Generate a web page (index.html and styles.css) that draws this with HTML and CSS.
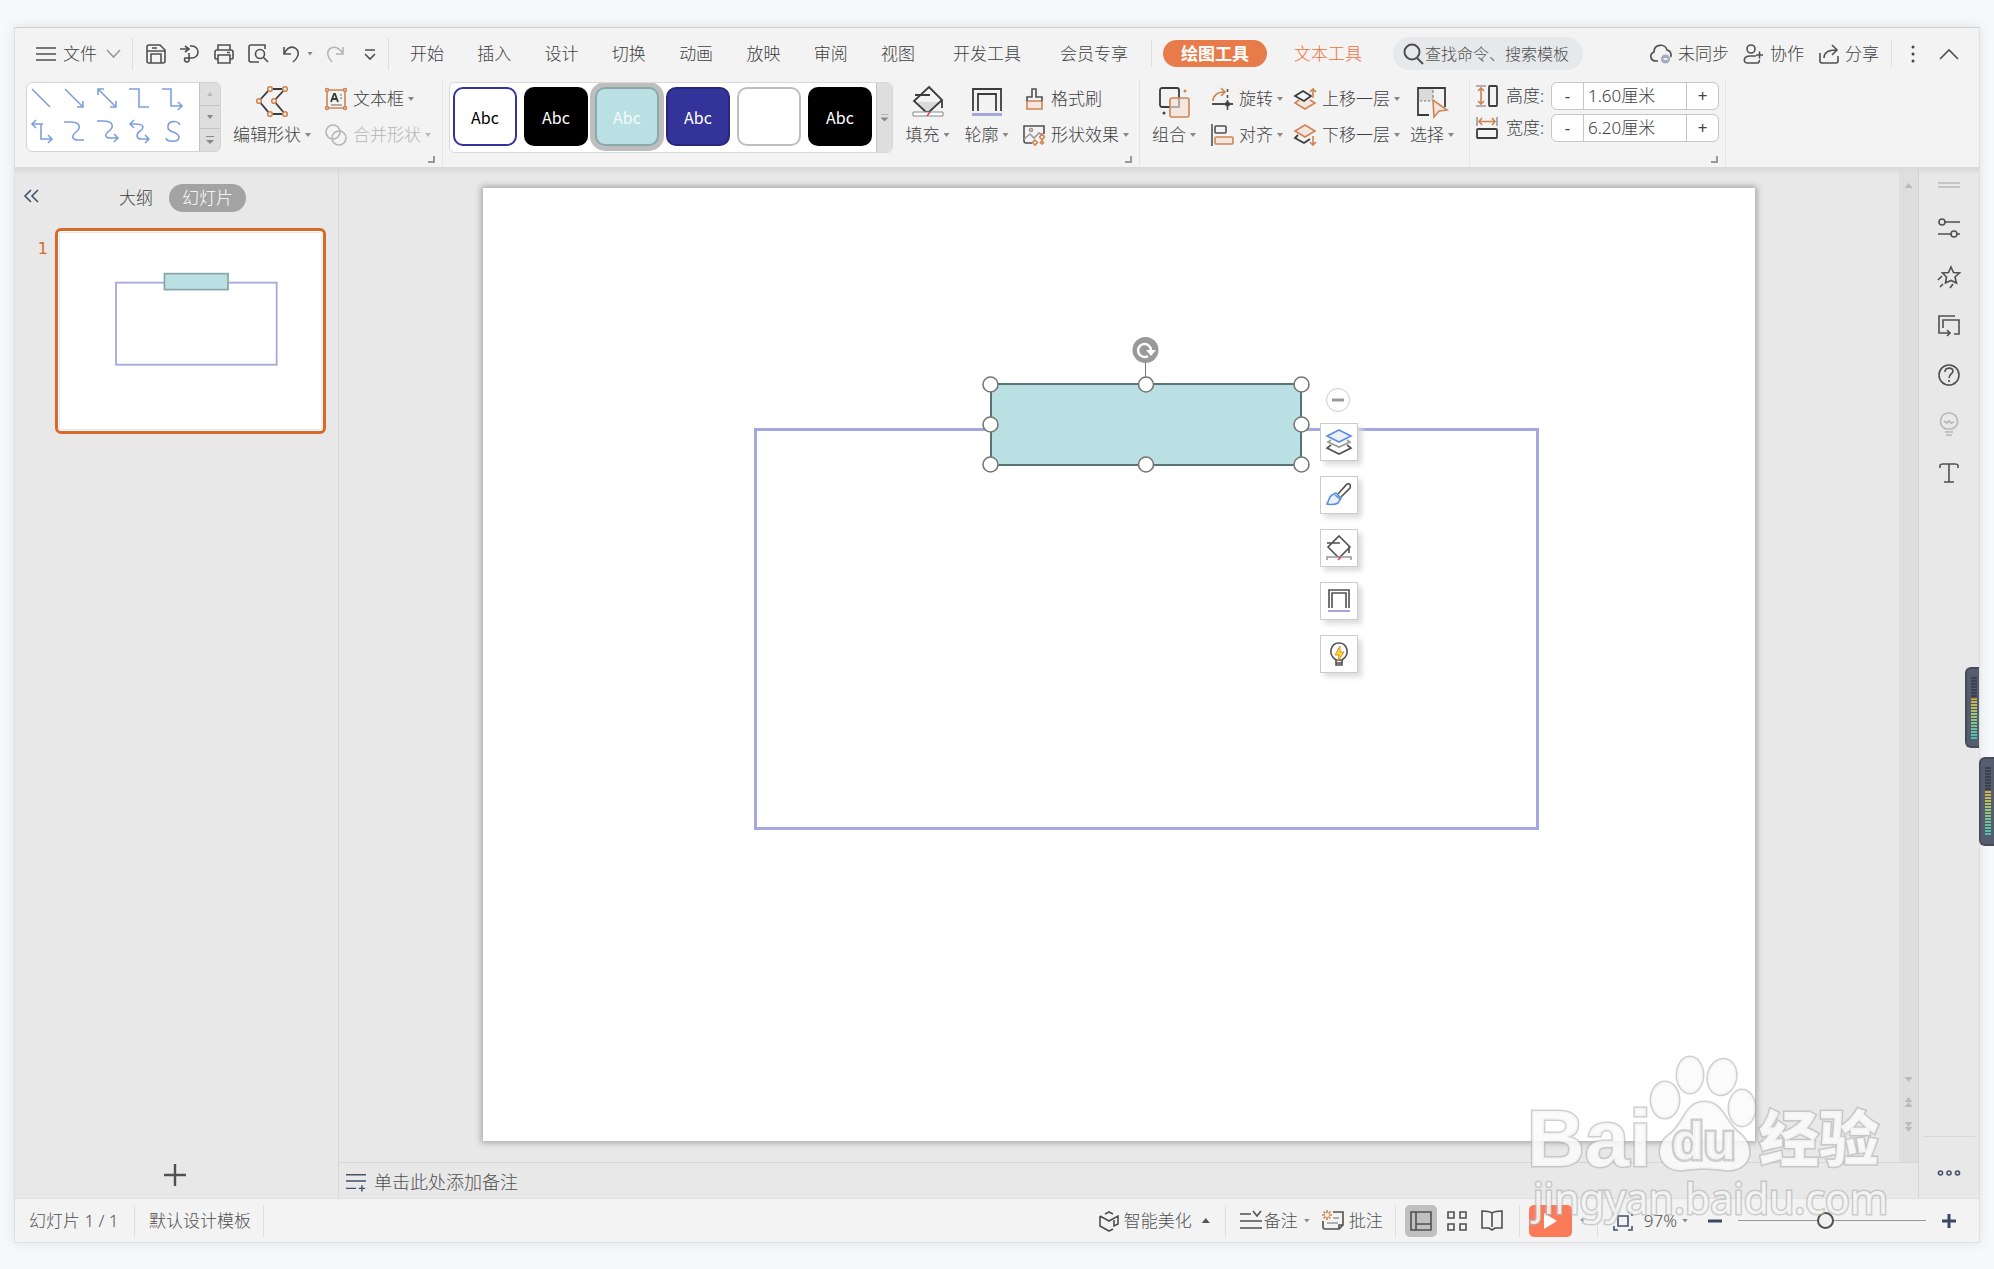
FILE: index.html
```html
<!DOCTYPE html>
<html lang="zh-CN">
<head>
<meta charset="utf-8">
<meta name="viewport" content="width=device-width, initial-scale=1">
<title>演示文稿</title>
<link rel="stylesheet" href="styles.css">
</head>
<body>
<div class="app">
  <header class="menu">
    <button class="file"><svg class="i20" viewBox="0 0 20 20"><path d="M0 4h20M0 10h20M0 16h20"/></svg>文件<svg class="i13 soft" viewBox="0 0 13 13"><path d="M0 3l6.500 7L13 3"/></svg></button>
    <span class="sep"></span>
    <div class="quick">
      <button aria-label="保存"><svg class="i20" viewBox="0 0 20 20"><path d="M3 1h11l5 5v11a2 2 0 0 1-2 2H3a2 2 0 0 1-2-2V3a2 2 0 0 1 2-2zM5 19V10h10v9M1 7h18M6 4h5"/></svg></button>
      <button aria-label="导出"><svg class="i20" viewBox="0 0 20 20"><path d="M0 5h8M5 2l4 3-4 3M10 2h2a6 6 0 0 1 0 12H5a2.500 2.500 0 1 0 4 3V9"/></svg></button>
      <button aria-label="打印"><svg class="i20" viewBox="0 0 20 20"><path d="M4 6V1h12v5M4 15H2a1 1 0 0 1-1-1V8a2 2 0 0 1 2-2h14a2 2 0 0 1 2 2v6a1 1 0 0 1-1 1h-2M4 11h12v8H4zM13 8.500h3"/></svg></button>
      <button aria-label="预览"><svg class="i20" viewBox="0 0 20 20"><path d="M17 5V1H3a2 2 0 0 0-2 2v13a2 2 0 0 0 2 2h8"/><circle cx="12" cy="10" r="4.500"/><path d="M15.500 13.500L20 18"/></svg></button>
      <button aria-label="撤销"><svg class="i20" viewBox="0 0 20 20"><path d="M2 3v7h7M2 10C5 4 9 2 13 4c5 3 4 9-2 14"/></svg></button>
    </div>
    <span class="caret undo-caret"></span>
    <button class="redo" aria-label="重做"><svg class="i20 faint" viewBox="0 0 20 20"><path d="M18 3v7h-7M18 10C15 4 10 2 6 4c-5 3-4 9 1 14"/></svg></button>
    <button class="more" aria-label="更多"><svg class="i14" viewBox="0 0 14 14"><path d="M2 3h10M2 7l5 5 5-5"/></svg></button>
    <span class="sep"></span>
    <nav class="tabs"><button>开始</button><button>插入</button><button>设计</button><button>切换</button><button>动画</button><button>放映</button><button>审阅</button><button>视图</button></nav>
    <nav class="tabs-wide"><button>开发工具</button><button>会员专享</button></nav>
    <span class="sep short"></span>
    <button class="tab-active">绘图工具</button>
    <button class="tab-text">文本工具</button>
    <label class="search"><svg class="i22" viewBox="0 0 22 22"><circle cx="9" cy="9" r="7.500"/><path d="M14 15l6 6"/></svg><input type="text" aria-label="搜索" placeholder="查找命令、搜索模板"></label>
    <div class="account">
      <button><svg class="i22" viewBox="0 0 22 22"><path d="M8 18H6C0 18-1 11 4 9 4 1 15 0 17 7c5 1 5 7 2 8"/><circle class="badge" cx="15.500" cy="16" r="5"/><path class="white" d="M13.500 16h4"/></svg>未同步</button>
      <button><svg class="i20" viewBox="0 0 20 20"><circle cx="7" cy="5" r="4"/><path d="M12 12H6c-7 0-7 7-3 7h10c2 0 3-2 2-3M12 11h7M15.500 7.500v7"/></svg>协作</button>
      <button><svg class="i20" viewBox="0 0 20 20"><path d="M1 9v8a2 2 0 0 0 2 2h14a2 2 0 0 0 2-2v-5M5 14c0-6 4-8 12-8M13 1l5 5-5 5"/></svg>分享</button>
    </div>
    <span class="sep short"></span>
    <button class="dots" aria-label="选项"><svg class="i6" viewBox="0 0 6 20"><g class="dark"><circle cx="3" cy="3" r="1.500"/><circle cx="3" cy="10" r="1.500"/><circle cx="3" cy="17" r="1.500"/></g></svg></button>
    <button class="collapse" aria-label="收起"><svg class="i20" viewBox="0 0 20 20"><path d="M1 15l9-9 9 9"/></svg></button>
  </header>

  <section class="ribbon">
    <div class="group">
      <div class="shapes">
        <svg class="shape-grid" viewBox="0 0 172 68"><path d="M5 6l18 18M38 6l18 18M50 24h6v-6M71 6l18 18M83 24h6v-6M77 6h-6v6M102 6h10v18h10M135 6h9v17h11M151 19l4 4-4 4M16 41H5M9 37l-4 4 4 4M14 41v15h11M21 52l4 4-4 4M37 39h6c11 0 11 6 6 10s-4 8 2 8h6M70 38h6c11 0 11 6 6 10s-4 7 2 7h7M87 51l4 4-4 4M103 41h5c10 0 9 4 5 7s-4 8 1 8h8M107 37l-4 4 4 4M118 52l4 4-4 4M153 42c-2-5-13-5-12 3 1 5 10 3 11 9 0 6-12 5-13 1"/></svg>
        <div class="scroller"><button aria-label="上"><span class="caret up pale"></span></button><button aria-label="下"><span class="caret"></span></button><button aria-label="展开"><span class="caret bar"></span></button></div>
      </div>
      <button class="big edit"><svg class="i32" viewBox="0 0 32 32"><path class="thick" d="M14 3h15L18 15l11 13H14L3 15z"/><g class="node"><circle cx="14" cy="3" r="2.300"/><circle cx="29" cy="3" r="2.300"/><circle cx="18" cy="15" r="2.300"/><circle cx="29" cy="28" r="2.300"/><circle cx="14" cy="28" r="2.300"/><circle cx="3" cy="15" r="2.300"/></g></svg><span>编辑形状<i class="caret"></i></span></button>
      <div class="stack box-stack">
        <button><svg class="i22" viewBox="0 0 22 22"><path class="or" d="M2 2h18v18H2z"/><path class="thick" d="M6 14l3-8h1l3 8M7 11h5"/><path class="mid" d="M15 7h2M15 10h2M6 17h11"/><g class="node"><circle cx="2" cy="2" r="1.500"/><circle cx="20" cy="2" r="1.500"/><circle cx="2" cy="20" r="1.500"/><circle cx="20" cy="20" r="1.500"/></g></svg><span>文本框</span><i class="caret"></i></button>
        <button class="disabled" disabled><svg class="i22 faint" viewBox="0 0 22 22"><circle cx="8" cy="8" r="7"/><circle cx="14" cy="14" r="7"/></svg><span>合并形状</span><i class="caret pale"></i></button>
      </div>
      <i class="corner"></i>
    </div>

    <div class="group">
      <div class="styles">
        <button class="tile outline">Abc</button><button class="tile black">Abc</button><button class="tile teal">Abc</button><button class="tile blue">Abc</button><button class="tile blank" aria-label="空白"></button><button class="tile black">Abc</button>
        <button class="drop" aria-label="展开样式"><span class="caret bar"></span></button>
      </div>
      <button class="big fill"><svg class="i32" viewBox="0 0 32 32"><path class="shade" d="M4 16h25L17 27h-3z"/><path class="thick" d="M17 1l13 13-13 12h-3L2 15zM3 9h15M30 14v8"/><path class="lite" d="M1 26h30v4H1z"/><path class="red" d="M18 26l-3 4"/></svg><span>填充<i class="caret"></i></span></button>
      <button class="big line"><svg class="i32" viewBox="0 0 32 32"><path class="thick" d="M2 25V3h28v22M7 25V8h18v17"/><path class="violet" d="M1 28.500h30"/></svg><span>轮廓<i class="caret"></i></span></button>
      <div class="stack">
        <button><svg class="i22" viewBox="0 0 22 22"><path class="peach" d="M4 13h15v8H4z"/><path d="M4 13V9h5V1h4v8h6v4"/></svg><span>格式刷</span></button>
        <button><svg class="i22" viewBox="0 0 22 22"><path d="M9 19H3a2 2 0 0 1-2-2V2h20v8"/><path class="mid" d="M1 15l6-5 4 4 5-5 4 2"/><circle class="mid" cx="8" cy="6" r="1.500"/><path class="or" d="M19 10l2.500 3-2.500 3-2.500-3zM12 16l2.500 2.500L12 21l-2.500-2.500zM19 17l1.500 1.500L19 20l-1.500-1.500z"/></svg><span>形状效果</span><i class="caret"></i></button>
      </div>
      <i class="corner"></i>
    </div>

    <div class="group">
      <button class="big combine"><svg class="i32" viewBox="0 0 32 32"><rect class="thick" x="2" y="2" width="19" height="19" rx="2"/><rect class="peach" x="12" y="12" width="19" height="19" rx="2"/><path class="mid" d="M21 12v9h-9"/><circle class="dark" cx="6" cy="27" r="1.500"/><circle class="ordot" cx="27" cy="5" r="1.500"/></svg><span>组合<i class="caret"></i></span></button>
      <div class="stack">
        <button><svg class="i22" viewBox="0 0 22 22"><path class="or" d="M2 13C2 8 6 4 13 4M10 0l4 4-4 4"/><path class="thick" d="M1 16h21"/><path d="M16.500 1v3M16.500 7v3M16.500 12v10"/><circle class="dark" cx="16.500" cy="16" r="2.500"/></svg><span>旋转</span><i class="caret"></i></button>
        <button><svg class="i22" viewBox="0 0 22 22"><path d="M1 0v22"/><rect x="4" y="2" width="11" height="7" rx="1"/><rect class="peach" x="4" y="13" width="18" height="7" rx="1"/></svg><span>对齐</span><i class="caret"></i></button>
      </div>
      <div class="stack layers">
        <button><svg class="i22" viewBox="0 0 22 22"><path class="peach" d="M5 12l-4 3 10 6 10-6-5-3"/><path class="thick" d="M9 3l8 5-7 5-9-5z"/><path class="or" d="M19 10V1M16 4l3-3 3 3"/></svg><span>上移一层</span><i class="caret"></i></button>
        <button><svg class="i22" viewBox="0 0 22 22"><path class="thick" d="M4 11l-3 3 9 5 6-4"/><path class="peach" d="M11 1l10 6-10 6L1 7z"/><path class="or" d="M19 12v9M16 18l3 3 3-3"/></svg><span>下移一层</span><i class="caret"></i></button>
      </div>
      <button class="big select"><svg class="i32" viewBox="0 0 32 32"><path class="shade" d="M3 3h14v12H3z"/><path class="mid" d="M17 4v3M17 9v3M4 15h2M8 15h2M12 15h2"/><path class="thick" d="M13 29H2V2h27v19"/><path class="peach" d="M17 14l1 17 5-6 8-1z"/></svg><span>选择<i class="caret"></i></span></button>
    </div>

    <div class="group size">
      <div class="field"><svg class="i22" viewBox="0 0 22 22"><path class="mid" d="M0 1h10M0 21h10"/><path class="or" d="M5 3v16M2 6l3-3 3 3M2 16l3 3 3-3"/><rect class="thick" x="13" y="1" width="8" height="20" rx="1"/></svg><label for="h">高度:</label><div class="spin"><button aria-label="减小高度">-</button><input id="h" value="1.60厘米"><button aria-label="增大高度">+</button></div></div>
      <div class="field"><svg class="i22" viewBox="0 0 22 22"><path class="mid" d="M1 0v9M21 0v9"/><path class="or" d="M3 4.500h16M6 1L3 4.500 6 8M16 1l3 3.500L16 8"/><rect class="thick" x="1" y="12" width="20" height="9" rx="1"/></svg><label for="w">宽度:</label><div class="spin"><button aria-label="减小宽度">-</button><input id="w" value="6.20厘米"><button aria-label="增大宽度">+</button></div></div>
      <i class="corner"></i>
    </div>
  </section>

  <div class="work">
    <aside class="pane">
      <div class="pane-head"><button class="fold" aria-label="折叠"><svg class="i16 navy" viewBox="0 0 16 16"><path d="M7 2L1 8l6 6M14 2L8 8l6 6"/></svg></button><button class="outline-tab">大纲</button><button class="slides-tab">幻灯片</button></div>
      <div class="thumb-row"><span class="num">1</span><button class="thumb" aria-label="第1页"><svg viewBox="0 0 1272 953"><rect class="frame-s" x="273" y="242" width="783" height="400"/><rect class="plate-s" x="509" y="198" width="310" height="78"/></svg></button></div>
      <button class="add" aria-label="新建幻灯片"><svg class="i22" viewBox="0 0 22 22"><path d="M11 0v22M0 11h22"/></svg></button>
    </aside>

    <main class="center">
      <div class="canvas">
        <div class="slide">
          <svg class="drawing" viewBox="0 0 1272 953">
            <rect class="frame" x="272.500" y="241.500" width="782" height="399"/>
            <rect class="plate" x="508" y="196" width="310" height="81"/>
            <path class="stem" d="M662.500 174v18"/>
            <circle class="knob" cx="662.500" cy="162" r="13"/>
            <path class="turn" d="M665 168a6.500 6.500 0 1 1 3-6"/>
            <path class="turn-tip" d="M663 162h10l-5 6z"/>
            <g class="handles"><circle cx="507.500" cy="196.500" r="7.500"/><circle cx="663" cy="196.500" r="7.500"/><circle cx="818.500" cy="196.500" r="7.500"/><circle cx="507.500" cy="236.500" r="7.500"/><circle cx="818.500" cy="236.500" r="7.500"/><circle cx="507.500" cy="276.500" r="7.500"/><circle cx="663" cy="276.500" r="7.500"/><circle cx="818.500" cy="276.500" r="7.500"/></g>
          </svg>
          <div class="floaters">
            <button class="round" aria-label="收起工具"><svg class="i12" viewBox="0 0 12 12"><path d="M0 6h12"/></svg></button>
            <button aria-label="图层"><svg class="i24" viewBox="0 0 24 24"><path d="M4 15l-4 3 12 6 12-6-4-3"/><path class="mid" d="M4 10l-3 2 11 5 11-5-3-2"/><path class="sky" d="M12 0l12 6-12 6L0 6z"/></svg></button>
            <button aria-label="画笔"><svg class="i24" viewBox="0 0 24 24"><path d="M11 11l9-10c3-1 4 1 3 4L14 14"/><path class="sky" d="M9 10l5 5-3 5c-3 2-6 2-11 1 2-3 2-8 5-9zM8 12l5 4"/></svg></button>
            <button aria-label="填充"><svg class="i24" viewBox="0 0 24 24"><path d="M12 0l11 11-10 10h-2L1 11zM0 7h13M22 10v7"/><path class="mid" d="M0 24v-3h24v3"/><path class="red" d="M14 21l-3 3"/></svg></button>
            <button aria-label="轮廓"><svg class="i24" viewBox="0 0 24 24"><path d="M2 19V1h20v18M5 19V4h14v15"/><path class="violet thin" d="M1 22h22"/></svg></button>
            <button aria-label="灵感"><svg class="i24" viewBox="0 0 24 24"><path d="M9 18c-9-6-5-17 3-17s12 11 3 17v5H9v-5h6M9 21h6"/><path class="bolt" d="M13 4l-5 9h4l-1 6 6-9h-4z"/></svg></button>
          </div>
        </div>
      </div>
      <div class="track"><i class="caret up pale"></i><span class="track-foot"><i class="caret pale"></i><b><i class="caret up pale"></i><i class="caret up pale"></i></b><b><i class="caret pale"></i><i class="caret pale"></i></b></span></div>
      <div class="notes"><svg class="i20 navy" viewBox="0 0 22 22"><path d="M0 3h22M0 10h22M0 18h11M14 18h7M17.500 14.500v7"/></svg><span>单击此处添加备注</span></div>
    </main>

    <aside class="side">
      <span class="grip"></span>
      <button aria-label="属性"><svg class="i22" viewBox="0 0 22 22"><circle cx="4" cy="5" r="3"/><path d="M7 5h15M0 17h13M19 17h3"/><circle cx="16" cy="17" r="3"/></svg></button>
      <button aria-label="动画"><svg class="i22" viewBox="0 0 22 22"><path d="M13 1l2.500 5.500 6 .5-4.500 4 1.500 6-5.500-2.500-5.500 2.500 1-6-4-4 6-.5zM4 10l-4 4M5 18l-3 3M15 18l-3 4"/></svg></button>
      <button aria-label="切换"><svg class="i22" viewBox="0 0 22 22"><path d="M17 1H1v17h11M9 15l3 3-3 3M5 13V5h16v14h-5"/></svg></button>
      <button aria-label="帮助"><svg class="i22" viewBox="0 0 22 22"><circle cx="11" cy="11" r="10"/><path d="M7 8c0-5 8-5 8-1 0 3-4 3-4 7M11 16v2"/></svg></button>
      <button aria-label="提示"><svg class="i22 faint" viewBox="0 0 22 22"><path d="M8 16C-1 12 2 0 11 0s12 12 3 16zM7 19h8M8 22h6M6 8l3 2 2-2 2 2 3-1"/></svg></button>
      <button aria-label="文字"><svg class="i22" viewBox="0 0 22 22"><path d="M2 6V4c0-2 1-2 3-2h12c2 0 3 0 3 2v2M11 2v18M6 20h10"/></svg></button>
      <button class="side-more" aria-label="更多"><svg class="i22 navy" viewBox="0 0 22 22"><circle cx="2.500" cy="11" r="2"/><circle cx="11" cy="11" r="2"/><circle cx="19.500" cy="11" r="2"/></svg></button>
    </aside>
  </div>

  <footer class="status">
    <span class="page">幻灯片 1 / 1</span><span class="sep"></span><span class="tpl">默认设计模板</span><span class="sep"></span>
    <button class="beauty"><svg class="i20" viewBox="0 0 20 20"><path d="M6 3l4-2 4 2M1 5v10l9 5 4-2M1 5l9 5 9-5v8l-4 2V9"/></svg>智能美化<i class="caret up wide"></i></button>
    <span class="sep"></span>
    <button class="memo"><svg class="i22" viewBox="0 0 22 22"><path d="M0 4h11M13 1l4 5 4-5M0 11h22M0 18h22"/></svg>备注<i class="caret"></i></button>
    <button class="comment"><svg class="i22" viewBox="0 0 22 22"><path d="M11 2h10v13l-4 4H3a2 2 0 0 1-2-2v-6M17 19v-4h4"/><path class="mid" d="M11 8h6M5 13h11"/><path class="or" d="M5 0v3M5 7v3M0 5h3M7 5h3M1.500 1.500l2 2M6.500 6.500l2 2M8.500 1.500l-2 2M3.500 6.500l-2 2"/></svg>批注</button>
    <span class="sep"></span>
    <button class="view on" aria-label="普通视图"><svg class="i22" viewBox="0 0 22 22"><path d="M1 2h20v18H1zM6 2v18M6 14h15"/></svg></button>
    <button class="view" aria-label="浏览视图"><svg class="i20" viewBox="0 0 20 20"><path d="M1 1h6v6H1zM13 1h6v6h-6zM1 13h6v6H1zM13 13h6v6h-6z"/></svg></button>
    <button class="view" aria-label="阅读视图"><svg class="i22" viewBox="0 0 22 22"><path d="M11 3C8 1 5 1 1 1v17h7l3 2 3-2h7V1c-4 0-7 0-10 2v14"/></svg></button>
    <span class="sep"></span>
    <button class="play" aria-label="放映"><svg class="i16" viewBox="0 0 16 16"><path d="M2 0l13 8-13 8z"/></svg></button>
    <i class="caret play-caret"></i>
    <span class="sep"></span>
    <button class="fit" aria-label="适应窗口"><svg class="i20 navy" viewBox="0 0 20 20"><path d="M1 5V1h4M15 1h4v4M19 15v4h-4M5 19H1v-4M5 5h10v10H5z"/></svg></button>
    <button class="zoom">97%<i class="caret"></i></button>
    <button class="minus" aria-label="缩小"><svg class="i14 bold" viewBox="0 0 14 14"><path d="M0 7h14"/></svg></button>
    <input class="slider" type="range" aria-label="缩放" min="0" max="100" value="46">
    <button class="plus" aria-label="放大"><svg class="i14 bold" viewBox="0 0 14 14"><path d="M0 7h14M7 0v14"/></svg></button>
  </footer>
</div>
<span class="meter inner"></span>
<span class="meter outer"></span>
<svg class="mark" viewBox="0 0 370 190" aria-label="百度经验">
  <g class="paw"><ellipse cx="145" cy="50" rx="14" ry="18"/><ellipse cx="170" cy="25" rx="13" ry="18"/><ellipse cx="202" cy="27" rx="14" ry="18" transform="rotate(12 202 27)"/><ellipse cx="222" cy="58" rx="13" ry="18"/><path d="M184 52c-19 0-20 23-35 33-17 12-9 38 15 35 14-2 26-2 40 0 24 3 35-20 15-37-15-12-16-31-35-31z"/></g>
  <text class="bai" x="7" y="116">Bai</text><text class="du" x="152" y="109">du</text><text class="cn" x="239" y="111">经验</text><text class="url" x="13" y="164">jingyan.baidu.com</text>
</svg>
</body>
</html>
```
FILE: styles.css
```css
* { box-sizing: border-box; }
body {
  margin: 0; min-height: 100vh; padding: 27px 14px 26px; display: flex; position: relative; overflow-x: hidden;
  background: #f7f8fa; color: #404040;
  font: 300 17px/20px "Noto Sans", "Noto Sans CJK SC", sans-serif;
}
button, input { font: inherit; color: inherit; margin: 0; padding: 0; border: 0; background: none; }
button { display: flex; align-items: center; white-space: nowrap; }
svg { display: block; flex: none; fill: none; stroke: #505050; stroke-width: 1.6; overflow: visible; }
i { font-style: normal; }
.app { flex: 1; min-width: 0; display: flex; flex-direction: column; border: 1px solid #dddfe1; border-top-color: #cbccce; background: #f3f3f3; box-shadow: 0 0 10px #dfe1e4; }

.i6 { width: 6px; height: 20px; }
.i12 { width: 12px; height: 12px; }
.i13 { width: 13px; height: 13px; }
.i14 { width: 14px; height: 14px; }
.i16 { width: 16px; height: 16px; }
.i20 { width: 20px; height: 20px; }
.i22 { width: 22px; height: 22px; }
.i24 { width: 24px; height: 24px; }
.i32 { width: 32px; height: 32px; }
.soft { stroke: #999; }
.faint { stroke: #b5b5b5; }
.navy { stroke: #45506b; }
.bold { stroke: #3b4763; stroke-width: 3; }
.thick { stroke: #3c3c3c; stroke-width: 1.8; }
.or { stroke: #cf8452; }
.node { stroke: #cf8452; fill: #f3f3f3; }
.peach { stroke: #cf8452; fill: #f3e6df; }
.shade { stroke: none; fill: #dadada; }
.lite { stroke: #888; fill: #fff; stroke-width: 1; }
.red { stroke: #e04848; }
.violet { stroke: #a5a5e0; stroke-width: 3; }
.dark { fill: #444; stroke: none; }
.ordot { fill: #cf8452; stroke: none; }
.badge { fill: #a4a9bd; stroke: #f3f3f3; stroke-width: 1; }
.white { stroke: #fff; }
.mid { stroke: #999; }
.sky { stroke: #5b8ee0; fill: #eaf1fb; }
.bolt { stroke: #d9922f; fill: #ffd92e; stroke-width: 1; }
.thin { stroke-width: 2; }

.caret { flex: none; display: inline-block; width: 6px; height: 4px; background: #888; clip-path: polygon(0 0, 100% 0, 50% 100%); }
.caret.up { clip-path: polygon(0 100%, 100% 100%, 50% 0); }
.caret.pale { background: #bbb; }
.caret.wide { width: 8px; height: 5px; background: #555; }
.caret.bar { width: 8px; height: 8px; clip-path: polygon(0 0, 100% 0, 100% 1px, 0 1px, 0 4px, 100% 4px, 50% 100%, 0 4px); }
.sep { flex: none; width: 1px; height: 32px; background: #dedede; }
.sep.short { height: 27px; }

.menu { height: 51px; display: flex; align-items: center; padding: 0 20px 0 21px; }
.menu button { flex: none; }
.file { gap: 7px; margin-right: 12px; }
.file .i13 { margin-left: 3px; }
.quick { display: flex; gap: 14px; margin-left: 13px; }
.undo-caret { margin: 0 12px 0 5px; }
.more { margin: 0 11px 0 18px; }
.tabs { flex: 0 1 505px; display: flex; justify-content: space-between; margin-left: 21px; }
.tabs-wide { display: flex; gap: 39px; margin: 0 23px 0 38px; }
.tab-active { width: 104px; height: 27px; justify-content: center; margin: 0 27px 0 11px; border-radius: 14px; background: #e87b4a; color: #fff; font-weight: 700; }
.tab-text { color: #f0703c; }
.search { flex: 0 1 190px; min-width: 0; height: 33px; margin-left: 31px; padding-left: 10px; display: flex; align-items: center; border-radius: 17px; background: #e6e8ea; }
.search svg { stroke-width: 2; }
.search input { width: 100%; min-width: 0; font-size: 16px; outline: 0; }
.search input::placeholder { color: #505050; opacity: 1; }
.account { display: flex; gap: 15px; margin: 0 12px 0 auto; }
.account button { gap: 6px; }
.dots { margin: 0 23px 0 18px; }

.ribbon { display: flex; height: 90px; border-bottom: 2px solid #dadada; }
.group { position: relative; height: 87px; padding: 2px 10px 0 0; display: flex; align-items: flex-start; border-right: 1px solid #e4e4e4; }
.corner { position: absolute; right: 7px; bottom: 3px; width: 7px; height: 7px; border: solid #999; border-width: 0 2px 2px 0; }
.shapes { width: 195px; height: 70px; margin: 1px 0 0 11px; display: flex; border: 1px solid #d4d4d4; border-radius: 6px; background: #fff; overflow: hidden; }
.shape-grid { width: 172px; height: 68px; stroke: #7d9fdd; stroke-width: 1.6; }
.scroller { flex: 1; display: grid; grid-template-rows: repeat(3, 1fr); gap: 1px; background: #c4c4c4; border-left: 1px solid #c4c4c4; }
.scroller button { justify-content: center; background: #dedede; }
.big { flex-direction: column; gap: 7px; padding-top: 5px; width: 60px; }
.big span { display: flex; align-items: center; gap: 4px; height: 20px; }
.edit { width: 88px; margin-left: 7px; }
.fill { width: 59px; margin-left: 4px; }
.line { width: 59px; }
.combine { margin-left: 4px; }
.select { margin: 0 -3px 0 2px; }
.stack { margin-left: 7px; display: grid; grid-template-rows: 36px 36px; justify-items: start; }
.stack button span { margin: 0 4px 0 6px; }
.group .box-stack { margin-left: 9px; margin-right: 1px; }
.layers { margin-left: 11px; }
.disabled { color: #b5b5b5; }
.styles { width: 444px; height: 71px; margin: 1px 1px 0 6px; padding-left: 3px; display: flex; align-items: flex-start; gap: 7px; border: 1px solid #d8d8d8; border-radius: 6px; background: #fff; overflow: hidden; }
.tile { flex: none; width: 64px; height: 59px; margin-top: 4px; justify-content: center; border-radius: 10px; font: 400 16px/20px "Noto Sans CJK SC", sans-serif; }
.outline { border: 2px solid #333399; color: #000; }
.black { background: #000; color: #fff; }
.teal { background: #bae0e3; border: 2px solid #8aa9ab; color: #f2fafa; box-shadow: 0 0 0 5px #bebebe; }
.blue { background: #333399; border: 2px solid #28287a; color: #fff; }
.blank { border: 2px solid #bebebe; }
.drop { flex: 1; align-self: stretch; justify-content: center; margin-left: -3px; background: #dedede; border-left: 1px solid #c4c4c4; }
.size { padding: 3px 6px 0; flex-direction: column; gap: 4px; }
.field { display: flex; align-items: center; height: 28px; }
.field label { width: 45px; margin-left: 8px; }
.spin { display: flex; width: 168px; height: 28px; border: 1px solid #c6c6c6; border-radius: 6px; background: #fff; }
.spin button { width: 31px; justify-content: center; font-weight: 400; }
.spin input { flex: 1; min-width: 0; padding-left: 4px; border: solid #c6c6c6; border-width: 0 1px; }

.work { flex: 1; display: flex; background: #e8e8e8; box-shadow: inset 0 5px 4px -3px #d8d8d8; }
.pane { width: 324px; display: flex; flex-direction: column; border-right: 1px solid #d8d8d8; }
.pane-head { display: flex; align-items: center; height: 28px; margin-top: 15px; }
.fold { margin: 0 79px 4px 9px; }
.slides-tab { width: 77px; height: 28px; justify-content: center; margin-left: 16px; border-radius: 14px; background: #a3a3a3; color: #fff; }
.thumb-row { display: flex; margin-top: 16px; }
.num { width: 40px; padding: 11px 7px 0 0; text-align: right; color: #d9682a; font: 16px/20px "DejaVu Sans", sans-serif; }
.thumb { width: 271px; border: 3px solid #d9682a; border-radius: 6px; background: #fff; padding: 2px; outline: 1px solid #e8e8e8; outline-offset: -5px; }
.thumb svg { width: 100%; }
.frame-s { stroke: #a9a9e2; stroke-width: 9; }
.plate-s { fill: #bae0e3; stroke: #86a3a5; stroke-width: 8; }
.add { margin: auto auto 12px 149px; }
.add svg { stroke-width: 2.400; }

.center { flex: 1; min-width: 0; display: grid; grid-template-columns: 1fr 20px; grid-template-rows: 1fr 36px; }
.canvas { padding: 19px 144px; }
.slide { position: relative; background: #fff; box-shadow: 0 0 6px 2px #a8a8a8; }
.drawing { width: 100%; }
.frame { stroke: #a6a6e0; stroke-width: 3; }
.plate { fill: #bae0e3; stroke: #587476; stroke-width: 2; }
.stem { stroke: #777; stroke-width: 1; }
.knob { fill: #999; stroke: none; }
.turn { stroke: #fff; stroke-width: 2.400; }
.turn-tip { fill: #fff; stroke: none; }
.handles { fill: #fff; stroke: #777; stroke-width: 1.6; }
.floaters { position: absolute; left: 65.8%; top: 21%; display: grid; gap: 15px; }
.floaters button { width: 38px; height: 38px; justify-content: center; background: #fff; border: 1px solid #ccc; box-shadow: 4px 4px 5px #ddd; }
.floaters .round { width: 24px; height: 24px; margin: 0 0 -4px 6px; border-radius: 50%; box-shadow: none; }
.round svg { stroke: #999; stroke-width: 3; }
.track { display: flex; flex-direction: column; justify-content: space-between; align-items: center; padding: 14px 0 30px; background: #dedede; border-right: 1px solid #d2d2d2; }
.track .caret { width: 8px; height: 5px; }
.track-foot { display: grid; gap: 15px; }
.track b { display: grid; }
.notes { grid-column: 1 / 3; display: flex; align-items: center; gap: 8px; padding: 3px 0 0 7px; border: solid #d5d5d5; border-width: 1px 1px 0 0; font-size: 18px; color: #505050; }
.side { width: 60px; padding-top: 13px; display: flex; flex-direction: column; align-items: center; }
.side button { height: 22px; margin-bottom: 27px; }
.grip { width: 22px; height: 6px; margin-bottom: 29px; border: solid #c4c4c4; border-width: 2px 0; }
.side .side-more { width: 52px; height: 62px; justify-content: center; margin: auto 0 0; border-top: 1px solid #d8d8d8; }
.side-more svg { margin-top: 10px; }

.status { height: 44px; display: flex; align-items: center; border-top: 1px solid #dfdfdf; color: #505050; }
.page { width: 119px; padding-left: 14px; white-space: nowrap; }
.tpl { padding: 0 12px 0 14px; white-space: nowrap; }
.status button { flex: none; }
.beauty { gap: 5px; margin: 0 15px 0 auto; }
.beauty .caret { margin-left: 5px; }
.memo { margin: 0 12px 0 14px; gap: 2px; }
.memo .caret { margin-left: 4px; }
.comment { gap: 5px; margin-right: 12px; }
.view { height: 32px; justify-content: center; margin: 0 17px 0 0; }
.view.on { width: 32px; margin: 0 10px 0 9px; border-radius: 5px; background: #c0c0c0; }
.view + .view { margin-right: 14px; }
.view + .view + .view { margin-right: 16px; }
.play { width: 43px; height: 32px; justify-content: center; margin: 0 8px 0 9px; border-radius: 5px; background: #fb7b58; }
.play svg { fill: #fff; stroke: none; }
.play-caret { margin-right: 11px; }
.fit { margin: 0 11px 0 15px; }
.zoom { gap: 5px; margin-right: 20px; }
.slider { appearance: none; width: 188px; height: 18px; margin: 0 16px; }
.slider::-webkit-slider-runnable-track { height: 1px; background: #999; }
.slider::-webkit-slider-thumb { appearance: none; width: 17px; height: 17px; margin-top: -8px; border: 2px solid #505050; border-radius: 50%; background: #f0f0f0; }
.plus { margin-right: 23px; }

.meter { position: absolute; top: 667px; right: 15px; width: 14px; height: 81px; border: 2px solid #454b59; border-right: 0; border-radius: 6px 0 0 6px; background: #565d6e; }
.meter::after { content: ""; display: block; width: 6px; height: 62px; margin: 8px 0 0 4px; background: repeating-linear-gradient(#0000 0 2px, #50586a 2px 3px), linear-gradient(#3c414d 34%, #d8b040 35%, #a0c870 60%, #48c0b0); }
.meter.outer { top: 757px; right: 0; width: 15px; height: 89px; }
.meter.outer::after { height: 68px; }
.mark { position: absolute; right: 104px; bottom: 29px; width: 370px; height: 190px; pointer-events: none; fill: #fafafa; fill-opacity: .85; stroke: #b0b0b0; stroke-opacity: .6; stroke-width: 3; paint-order: stroke; }
.mark text { font-family: "Liberation Sans", "Noto Sans CJK SC", sans-serif; font-weight: 700; }
.mark .bai { font-size: 80px; font-weight: 700; }
.mark .du { font-size: 52px; stroke-width: 5; }
.mark .cn { font-family: "Noto Sans CJK SC", sans-serif; font-weight: 900; font-size: 60px; }
.mark .url { font-family: "Noto Sans", sans-serif; font-weight: 400; font-size: 41px; }
```
